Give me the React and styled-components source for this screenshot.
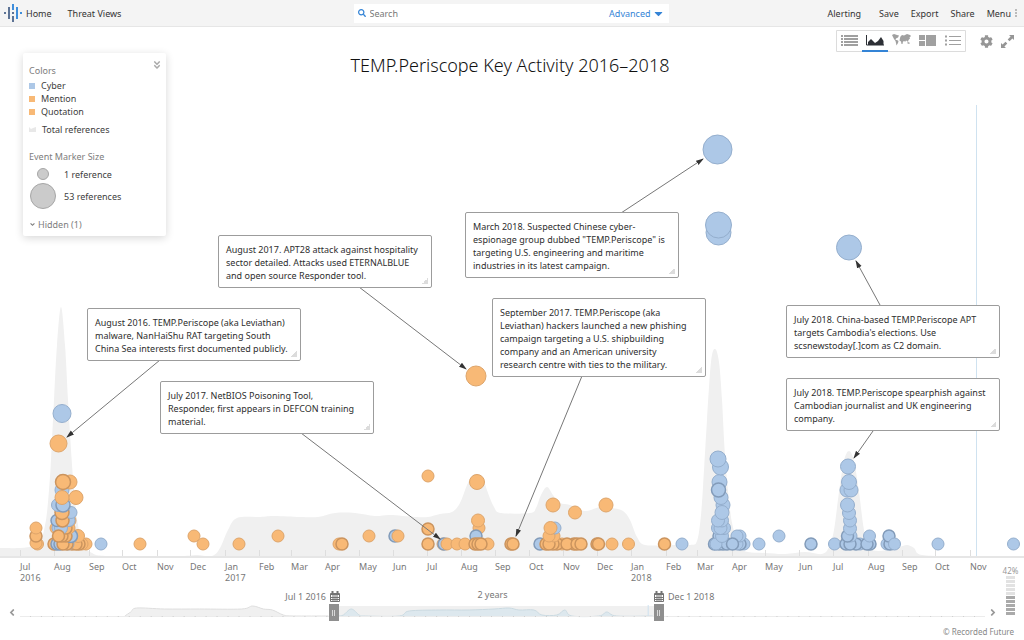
import { useState } from "react";
import styled, { createGlobalStyle } from "styled-components";
import {
  FaAngleDoubleDown,
  FaAngleDown,
  FaAngleLeft,
  FaAngleRight,
  FaCaretDown,
  FaCog,
  FaSearch,
} from "react-icons/fa";

const BLUE = "#adc8e7";
const ORANGE = "#f8b976";

const MONTHS = [
  [20, "Jul", "2016"], [54, "Aug"], [89, "Sep"], [122, "Oct"], [157, "Nov"], [190, "Dec"],
  [225, "Jan", "2017"], [259, "Feb"], [291, "Mar"], [325, "Apr"], [359, "May"], [393, "Jun"],
  [427, "Jul"], [461, "Aug"], [495, "Sep"], [529, "Oct"], [563, "Nov"], [597, "Dec"],
  [631, "Jan", "2018"], [666, "Feb"], [697, "Mar"], [732, "Apr"], [765, "May"], [799, "Jun"],
  [833, "Jul"], [868, "Aug"], [902, "Sep"], [935, "Oct"], [970, "Nov"],
];

const NOTES = [
  { x: 87, y: 308, text: "August 2016. TEMP.Periscope (aka Leviathan)\nmalware, NanHaiShu RAT targeting South\nChina Sea interests first documented publicly." },
  { x: 160, y: 381, text: "July 2017. NetBIOS Poisoning Tool,\nResponder, first appears in DEFCON training\nmaterial." },
  { x: 218, y: 235, text: "August 2017. APT28 attack against hospitality\nsector detailed. Attacks used ETERNALBLUE\nand open source Responder tool." },
  { x: 465, y: 212, text: "March 2018. Suspected Chinese cyber-\nespionage group dubbed \"TEMP.Periscope\" is\ntargeting U.S. engineering and maritime\nindustries in its latest campaign." },
  { x: 492, y: 298, text: "September 2017. TEMP.Periscope (aka\nLeviathan) hackers launched a new phishing\ncampaign targeting a U.S. shipbuilding\ncompany and an American university\nresearch centre with ties to the military." },
  { x: 786, y: 305, text: "July 2018. China-based TEMP.Periscope APT\ntargets Cambodia's elections. Use\nscsnewstoday[.]com as C2 domain." },
  { x: 786, y: 378, text: "July 2018. TEMP.Periscope spearphish against\nCambodian journalist and UK engineering\ncompany." },
];

const ARROWS = [
  [160, 360, 67, 437],
  [301, 433, 440, 539],
  [359, 287, 466, 369],
  [621, 213, 703, 159],
  [582, 376, 516, 536],
  [880, 305, 856, 261],
  [873, 431, 854, 458],
];

// color, x, y, radius, number of references stacked on the spot
const EVENTS = [
  ["b", 717.5, 149.5, 14.5], ["b", 718.5, 232.5, 12.5], ["b", 718.5, 225, 13], ["b", 849, 247.5, 12.5],
  ["b", 62, 413.5, 9], ["o", 58.5, 443.5, 8.5], ["o", 476, 376, 10],

  ["o", 37.5, 544], ["o", 36, 543], ["o", 36, 536, 6, 2], ["o", 36, 528],

  ["o", 54, 544, 6, 2], ["b", 57, 544, 6, 2], ["b", 60, 544, 6, 2], ["o", 72, 544, 6, 2],
  ["o", 86, 544], ["o", 82, 544], ["o", 79, 544, 6, 2], ["o", 76, 544, 6, 2], ["b", 68, 544],
  ["o", 67, 544, 6, 2], ["o", 63, 544, 6, 3], ["o", 78, 536, 6.5], ["b", 71, 536, 6.5, 3],
  ["o", 66, 536, 6, 2], ["o", 62, 536, 6, 2], ["o", 56, 528], ["b", 58, 528], ["o", 69, 528, 6],
  ["o", 66, 528, 6, 2], ["b", 61, 528, 6.5], ["o", 58.5, 536, 6, 2],
  ["b", 57, 520.5, 6, 2], ["o", 70, 520.5, 6], ["b", 69, 520.5, 6], ["o", 62.5, 520.5, 6.5, 2],
  ["b", 71, 512.5, 6], ["o", 62, 512.5, 7, 2], ["b", 58, 505, 6.5], ["b", 63, 505, 7, 3],
  ["b", 62, 490, 7], ["o", 62, 497.5, 7], ["o", 76, 497.5, 7], ["o", 70, 482, 7], ["o", 63, 482, 7.5, 3],
  ["b", 101, 544],

  ["o", 140, 544], ["o", 194, 536], ["o", 203, 544], ["o", 239, 544], ["o", 278, 536],
  ["o", 339, 544], ["o", 342, 544, 6, 3], ["o", 369, 536], ["b", 395, 536, 6, 2], ["o", 398, 536],
  ["o", 428, 476], ["o", 428, 529, 6, 3], ["o", 428, 544, 6, 3],
  ["o", 443, 544], ["b", 444, 544, 6, 2], ["o", 447, 544], ["o", 457, 544], ["o", 465, 544],
  ["o", 477, 482, 7.5], ["o", 479, 528], ["o", 478, 520.5, 6.5], ["b", 476, 536, 6, 2],
  ["o", 488, 544], ["o", 475, 544, 6, 3], ["o", 478, 544, 6, 3], ["o", 481, 544, 6, 3],
  ["o", 511, 544, 6, 2], ["o", 513, 544, 6, 2],

  ["b", 540, 544, 6, 3], ["o", 546, 544, 6, 2], ["o", 562, 544], ["o", 557, 544, 6, 2], ["o", 553, 544, 6, 2],
  ["o", 549, 544, 6, 2], ["o", 554, 536], ["o", 549, 536], ["b", 555, 528], ["o", 550.5, 528, 6.5],
  ["o", 553, 505, 7], ["o", 575, 512.5, 6.5], ["o", 606, 505, 7],
  ["o", 574, 544, 6, 2], ["o", 567, 544, 6, 2], ["o", 577, 544, 6, 2], ["o", 581, 544, 6, 2],
  ["o", 597, 544, 6, 2], ["o", 598.5, 544, 6, 2], ["o", 612, 544], ["o", 628.5, 544], ["o", 664.5, 544, 6, 3],
  ["b", 682, 544],

  ["b", 714.5, 544, 6, 2], ["b", 719, 544, 6, 3], ["b", 723, 544, 6, 3], ["b", 727, 544, 6, 3],
  ["b", 719, 536, 6, 2], ["b", 744, 544], ["b", 740, 544, 6, 2], ["b", 737, 544], ["b", 740, 536], ["b", 737, 536],
  ["b", 732.5, 544, 6, 2], ["b", 716, 544], ["b", 722, 536, 6.5],
  ["b", 718, 528, 6.5], ["b", 724, 528, 6.5], ["b", 720.5, 528, 6.5], ["b", 722, 520.5, 6.5], ["b", 718, 520.5, 6.5],
  ["b", 723, 505, 7], ["b", 721, 497.5, 7], ["b", 722, 512.5, 7], ["b", 719.5, 482, 7.5],
  ["b", 718.5, 490, 7, 3], ["b", 720.5, 467, 8], ["b", 718, 459, 8],
  ["b", 759, 544], ["b", 779, 536], ["b", 811, 544, 6, 3], ["b", 834.5, 544],

  ["b", 860, 544], ["b", 856, 544, 6, 2], ["b", 846, 544, 6, 2], ["b", 850, 544, 6, 3], ["b", 851, 536],
  ["b", 847.5, 536, 6, 3], ["b", 850, 528.5, 6.5], ["b", 850, 520.5, 6.5], ["b", 849, 513, 6.5], ["b", 847.5, 505, 7],
  ["b", 847, 490, 7], ["b", 851, 490, 7], ["b", 849, 482, 7.5], ["b", 848, 466.5, 7.5],
  ["b", 870, 544, 6, 2], ["b", 867, 544, 6, 2], ["b", 869.5, 536],
  ["b", 887, 544], ["b", 890, 544, 6, 2], ["b", 889, 536, 6, 3], ["b", 894.5, 544],
  ["b", 938, 544], ["b", 1013.5, 544],
];

const TOTALS = [
  [0, 548], [20, 548], [34, 546], [41, 540], [46, 520], [49, 490], [51, 460], [54, 400], [57, 345], [61, 307],
  [65, 345], [68, 400], [71, 450], [74, 490], [78, 525], [84, 545], [92, 553], [108, 556], [180, 556],
  [197, 555], [212, 556], [220, 548], [228, 530], [237, 518], [260, 517], [275, 516], [300, 517], [318, 517],
  [335, 513], [355, 513], [375, 516], [390, 515], [415, 517], [428, 517], [440, 514], [452, 512], [460, 503],
  [467, 485], [472, 476], [477, 474], [483, 479], [488, 493], [494, 507], [501, 513], [530, 513], [536, 508],
  [541, 495], [547, 487], [553, 495], [560, 503], [570, 505], [585, 511], [600, 507], [612, 508], [623, 511],
  [630, 520], [637, 537], [645, 545], [670, 545], [690, 545], [697, 541], [701, 515], [704, 470], [707, 420],
  [711, 362], [715, 349], [719, 362], [722, 400], [725, 455], [730, 510], [735, 535], [740, 548], [748, 552],
  [765, 553], [785, 554], [805, 552], [822, 554], [829, 547], [834, 530], [839, 492], [844, 461], [849, 451],
  [854, 461], [859, 492], [864, 530], [870, 549], [890, 550], [900, 547], [907, 545], [914, 548], [922, 555],
  [960, 556], [1024, 556],
];

const OVERVIEW = [
  [125, 616], [131, 612], [137, 608], [165, 609], [200, 609], [242, 609], [253, 606], [264, 609],
  [273, 610], [284, 615], [294, 616], [329, 616],
];

const SELECTED = [
  [339, 616], [344, 615], [352, 609], [360, 615], [366, 616], [400, 616], [410, 611], [440, 610], [470, 610],
  [495, 609], [510, 608], [520, 610], [535, 610], [543, 615], [558, 615], [566, 610], [573, 616], [600, 616],
  [608, 612], [618, 616], [654, 616],
];

function smooth(points) {
  return points
    .map(([x, y], i) => {
      if (i === 0) return `M${x} ${y}`;
      const a = points[i - 2] || points[i - 1];
      const b = points[i - 1];
      const d = points[i + 1] || [x, y];
      return `C${b[0] + (x - a[0]) / 6} ${b[1] + (y - a[1]) / 6} ${x - (d[0] - b[0]) / 6} ${y - (d[1] - b[1]) / 6} ${x} ${y}`;
    })
    .join("");
}

function area(points, base) {
  return `${smooth(points)}L${points[points.length - 1][0]} ${base}L${points[0][0]} ${base}Z`;
}

function outline(kind, refs) {
  if (kind === "b") return refs > 1 ? "#829bb9" : "#94aecd";
  return refs > 1 ? "#cb945e" : "#dea56b";
}

const GlobalStyle = createGlobalStyle`
  * {
    box-sizing: border-box;
  }
  body {
    margin: 0;
    background: #fff;
    color: #404040;
    font-family: "Noto Sans", "Open Sans", sans-serif;
    font-size: 9px;
  }
  button, input {
    font: inherit;
    color: inherit;
    border: 0;
    padding: 0;
    background: none;
  }
  button {
    cursor: pointer;
  }
`;

const Page = styled.div`
  display: flex;
  flex-direction: column;
  min-height: 100vh;
`;

const Header = styled.header`
  display: grid;
  grid-template-columns: 1fr 315px 1fr;
  align-items: center;
  height: 27px;
  padding: 0 5px 0 3px;
  background: #f4f4f4;
  border-bottom: 1px solid #e6e6e6;
`;

const Nav = styled.nav`
  display: flex;
  align-items: center;
  justify-content: ${(p) => (p.$end ? "flex-end" : "flex-start")};
  gap: ${(p) => (p.$end ? "12px" : "16px")};
`;

const NavLink = styled.a`
  display: flex;
  align-items: center;
  gap: 3px;
  color: #333;
  text-decoration: none;
`;

const NavButton = styled.button`
  color: #333;
  margin-left: ${(p) => (p.$first ? "6px" : "0")};
`;

const MenuButton = styled(NavButton)`
  display: flex;
  align-items: center;
  gap: 4px;
  padding-right: 2px;
`;

const Search = styled.form`
  display: flex;
  align-items: center;
  gap: 4px;
  height: 19px;
  padding: 0 4px;
  background: #fff;
  color: #3484d6;
`;

const SearchInput = styled.input`
  flex: 1;
  min-width: 0;
  color: #333;
  outline: none;
  &::placeholder {
    color: #777;
  }
`;

const Advanced = styled.button`
  display: flex;
  align-items: center;
  gap: 1px;
  color: #3484d6;
`;

const Main = styled.main`
  position: relative;
`;

const Tools = styled.div`
  display: flex;
  align-items: center;
  justify-content: flex-end;
  gap: 8px;
  height: 25px;
  padding: 3px 10px 0 0;
  color: #969696;
`;

const ViewSwitch = styled.div`
  display: flex;
  margin-right: 6px;
  border-radius: 1px;
  box-shadow: inset 0 0 0 1px #dcdcdc;
`;

const ViewButton = styled.button`
  display: flex;
  align-items: center;
  justify-content: center;
  width: 26px;
  height: 22px;
  border-bottom: 2px solid ${(p) => (p.$active ? "#3484d6" : "transparent")};
  color: ${(p) => (p.$active ? "#2d3036" : "#a0a0a0")};
`;

const ToolButton = styled.button`
  display: flex;
  font-size: 13px;
`;

const Title = styled.h1`
  margin: 0;
  padding: 1px 4px 0 0;
  font-size: 18px;
  font-weight: 300;
  line-height: 24px;
  text-align: center;
  color: #111;
`;

const Canvas = styled.div`
  position: relative;
  margin-top: 21px;
`;

const Plot = styled.svg`
  display: block;
  width: 100%;
  height: auto;
`;

const Note = styled.div`
  position: absolute;
  left: calc(${(p) => p.$x} / 1024 * 100%);
  top: calc(${(p) => p.$y - 98} / 460 * 100%);
  width: 214px;
  padding: 7px 6px 5px 7px;
  border: 1px solid #9c9c9c;
  border-radius: 2px;
  background: #fff;
  color: #2e2e2e;
  line-height: 13px;
  white-space: pre;

  &::after {
    content: "";
    position: absolute;
    right: 3px;
    bottom: 3px;
    width: 6px;
    height: 6px;
    background: linear-gradient(135deg, transparent 50%, #dcdcdc 50%);
  }
`;

const LegendPanel = styled.aside`
  position: absolute;
  left: 23px;
  top: 26px;
  width: 143px;
  padding: 10px 4px 5px 6px;
  border-radius: 2px;
  background: #fff;
  box-shadow: 0 2px 8px rgba(0, 0, 0, 0.16);
  z-index: 1;
`;

const LegendTitle = styled.h2`
  display: flex;
  justify-content: space-between;
  margin: 0;
  font-size: 9px;
  font-weight: 400;
  line-height: 16px;
  color: #7d7d7d;
`;

const Collapse = styled.button`
  display: flex;
  height: 4px;
  align-items: center;
  color: #aaa;
`;

const LegendList = styled.ul`
  list-style: none;
  margin: 0 0 ${(p) => p.$after || 0}px;
  padding: 0;
`;

const LegendItem = styled.li`
  display: flex;
  align-items: center;
  gap: 6px;
  line-height: 13px;
`;

const Swatch = styled.span`
  width: 6px;
  height: 6px;
  background: ${(p) => p.$color};
`;

const SizeItem = styled.li`
  display: grid;
  grid-template-columns: 28px 1fr;
  align-items: center;
  justify-items: center;
  gap: 7px;
  min-height: 18px;
  span:last-child {
    justify-self: start;
  }
`;

const SizeDot = styled.span`
  width: ${(p) => p.$size}px;
  height: ${(p) => p.$size}px;
  border: 1px solid #a6a6a6;
  border-radius: 50%;
  background: #cbcbcb;
`;

const HiddenToggle = styled.button`
  display: flex;
  align-items: center;
  gap: 2px;
  margin-top: 9px;
  line-height: 13px;
  color: #7d7d7d;
`;

const Timeline = styled.section`
  display: grid;
  grid-template-columns: 1fr 24px;
  color: #777;
`;

const Axis = styled.ol`
  display: grid;
  grid-template-columns: ${(p) => p.$columns};
  list-style: none;
  margin: 0;
  padding: 3px 0 0 2%;
  height: 31px;
  line-height: 11px;
`;

const Month = styled.li`
  min-width: 0;
  white-space: pre-line;
`;

const Dates = styled.div`
  display: grid;
  grid-template-columns: 340fr 305fr 355fr;
  align-items: end;
  height: 14px;
  line-height: 12px;
`;

const DateButton = styled.button`
  display: flex;
  align-items: center;
  gap: 4px;
  justify-self: ${(p) => p.$side};
  margin-left: ${(p) => (p.$side === "start" ? "9px" : "0")};
`;

const Span = styled.span`
  align-self: start;
  line-height: 11px;
  text-align: center;
`;

const RangeRow = styled.div`
  display: flex;
  align-items: center;
  gap: 4px;
  padding: 0 3px 0 8px;
`;

const StepButton = styled.button`
  display: flex;
  width: 8px;
  font-size: 11px;
  color: #999;
`;

const RangeBox = styled.div`
  flex: 1;
  display: grid;
  height: 18px;
  > * {
    grid-area: 1 / 1;
  }
`;

const OverviewPlot = styled.svg`
  width: 100%;
  height: 18px;
`;

const Handle = styled.input`
  appearance: none;
  width: 100%;
  height: 18px;
  margin: 0;
  pointer-events: none;
  &::-webkit-slider-thumb {
    appearance: none;
    width: 10px;
    height: 17px;
    pointer-events: auto;
    background: linear-gradient(90deg, transparent 3px, #d8d8d8 3px 4px, transparent 4px 5px, #d8d8d8 5px 6px, transparent 6px)
        center 6px / 10px 6px no-repeat,
      #8f8f8f;
  }
`;

const Gauge = styled.div`
  display: flex;
  flex-direction: column;
  align-items: center;
  gap: 1px;
  padding: 8px 3px 0 0;
  font-size: 8px;
  line-height: 9px;
  color: #999;
`;

const GaugeBar = styled.span`
  width: 9px;
  height: 3px;
  background: ${(p) => (p.$on ? "#aaa" : "#e2e2e2")};
`;

const Footer = styled.footer`
  padding: 5px 10px 0;
  font-size: 8px;
  line-height: 12px;
  text-align: right;
  color: #888;
`;

const Logo = () => (
  <svg width="20" height="20" viewBox="0 0 20 20" strokeWidth="2">
    <path d="M1 10h2M6 4v12M10 13v6M9 10h2" stroke="#5d7395" />
    <path d="M10 1v6M14 4v12M17 10h2" stroke="#3f8edb" />
  </svg>
);

const CalendarIcon = () => (
  <svg width="10" height="12" viewBox="0 0 10 12" fill="none" stroke="#747474">
    <path d="M.5 2.5h9v8h-9zM0 3.5h10M3 4v7M5 4v7M7 4v7M1 6.5h8M1 8.500h8" />
    <path d="M2.500 0v3M7.500 0v3" strokeWidth="2" />
  </svg>
);

const ListIcon = () => (
  <svg width="17" height="12" viewBox="0 0 17 12" stroke="currentColor" strokeWidth="2">
    <path d="M0 2h2M0 5h2M0 8h2M0 11h2M3 2h14M3 5h14M3 8h14M3 11h14" />
  </svg>
);

const AreaIcon = () => (
  <svg width="18" height="12" viewBox="0 0 18 12">
    <path d="M.5 1v10H18" fill="none" stroke="currentColor" />
    <path d="M2 11V8l3-3 4 4 3-2 3-4 2.500 4v4z" fill="currentColor" />
  </svg>
);

const MapIcon = () => (
  <svg width="19" height="12" viewBox="0 0 19 12" fill="currentColor">
    <path d="M0 1l2-1 3 1 2 .5-1 2-2 1-.5 1.500L5 6l1.500 1-.5 2-1.500 2.500L4 9l-.5-2L2 5 1 3zM8 4l.5-1.500L10 1l2 .5 3-1.500 3 1 1 1-1.500 1.500.5 1-1.500 1.500-.5 2-1-1-1-.5-1 1.500-.5-1-1.500.5-.5 2.500L9.500 10 9 7.500 7.500 6.500zM15.500 8l2 .5V10l-2-.5z" />
  </svg>
);

const TilesIcon = () => (
  <svg width="17" height="12" viewBox="0 0 17 12" fill="currentColor">
    <path d="M0 1h6v5H0zM0 7h6v5H0zM7 1h10v11H7z" />
  </svg>
);

const BulletsIcon = () => (
  <svg width="16" height="11" viewBox="0 0 16 11" stroke="currentColor">
    <path d="M0 1.500h2M0 5.500h2M0 9.500h2" strokeWidth="2" />
    <path d="M4 1.500h12M4 5.500h12M4 9.500h12" />
  </svg>
);

const ExpandIcon = () => (
  <svg width="13" height="13" viewBox="0 0 13 13" fill="currentColor">
    <path d="M8 0h5v5l-1.600-1.600L8.500 6.300 6.700 4.500l2.900-2.900zM5 13H0V8l1.600 1.600 2.900-2.900 1.800 1.800-2.900 2.900z" />
  </svg>
);

const VIEWS = [
  ["List", ListIcon],
  ["Timeline", AreaIcon],
  ["Map", MapIcon],
  ["Tiles", TilesIcon],
  ["Details", BulletsIcon],
];

function Legend() {
  return (
    <LegendPanel>
      <LegendTitle>
        Colors
        <Collapse aria-label="Collapse legend">
          <FaAngleDoubleDown size={10} />
        </Collapse>
      </LegendTitle>
      <LegendList $after={5}>
        <LegendItem><Swatch $color={BLUE} />Cyber</LegendItem>
        <LegendItem><Swatch $color={ORANGE} />Mention</LegendItem>
        <LegendItem><Swatch $color={ORANGE} />Quotation</LegendItem>
      </LegendList>
      <LegendList $after={13}>
        <LegendItem>
          <svg width="7" height="5" viewBox="0 0 7 5">
            <path d="M0 0l2 2 2-1 3-1v5H0z" fill="#e8e8e8" />
          </svg>
          Total references
        </LegendItem>
      </LegendList>
      <LegendTitle>Event Marker Size</LegendTitle>
      <LegendList>
        <SizeItem><SizeDot $size={12} /><span>1 reference</span></SizeItem>
        <SizeItem><SizeDot $size={26} /><span>53 references</span></SizeItem>
      </LegendList>
      <HiddenToggle>
        <FaAngleDown size={7} />
        Hidden (1)
      </HiddenToggle>
    </LegendPanel>
  );
}

function Timechart() {
  return (
    <Canvas>
      <Plot viewBox="0 98 1024 460">
        <defs>
          <marker id="head" viewBox="0 0 8 6" refX="7" refY="3" markerWidth="8" markerHeight="6" orient="auto">
            <path d="M0 0.500L8 3L0 5.500z" fill="#333" />
          </marker>
        </defs>
        <path d={area(TOTALS, 557)} fill="#f0f0f0" />
        <path d="M0 557H1024" stroke="#e6e6e6" strokeWidth="2" />
        {MONTHS.map(([x]) => (
          <path key={x} d={`M${x + 0.5} 550v6`} stroke="#dedede" />
        ))}
        <path d="M976.500 105V556" stroke="#cfe2f0" />
        {EVENTS.map(([kind, x, y, r = 6, refs = 1], i) => (
          <circle
            key={i}
            cx={x}
            cy={y}
            r={r}
            fill={kind === "b" ? BLUE : ORANGE}
            stroke={outline(kind, refs)}
            strokeWidth={refs > 1 ? 1.5 : 1}
          />
        ))}
        {ARROWS.map(([x1, y1, x2, y2]) => (
          <line key={x1} x1={x1} y1={y1} x2={x2} y2={y2} stroke="#777" markerEnd="url(#head)" />
        ))}
      </Plot>
      {NOTES.map((note) => (
        <Note key={note.text} $x={note.x} $y={note.y}>{note.text}</Note>
      ))}
    </Canvas>
  );
}

function Overview() {
  const [from, setFrom] = useState(324);
  const [to, setTo] = useState(664);

  return (
    <RangeRow>
      <StepButton aria-label="Earlier"><FaAngleLeft /></StepButton>
      <RangeBox>
        <OverviewPlot viewBox="20 603 967 18" preserveAspectRatio="none">
          <path d={area(OVERVIEW, 616.5)} fill="#f0f0f0" />
          <path d={smooth(OVERVIEW)} fill="none" stroke="#dedede" />
          <path d="M334 606H660V616.500H334z" fill="#f0f0f0" />
          <path d={area(SELECTED, 616.5)} fill="#dde8ee" />
          <path d={smooth(SELECTED)} fill="none" stroke="#cbdae1" />
          <path d="M649.500 605V616" stroke="#cfe2f0" />
          <path d="M20 616.500H987" stroke="#ececec" />
          <path d="M30 616.500H987" stroke="#cfcfcf" strokeDasharray="1 10" />
        </OverviewPlot>
        <Handle type="range" aria-label="Start date" min="0" max="1000" value={from} onChange={(e) => setFrom(+e.target.value)} />
        <Handle type="range" aria-label="End date" min="0" max="1000" value={to} onChange={(e) => setTo(+e.target.value)} />
      </RangeBox>
      <StepButton aria-label="Later"><FaAngleRight /></StepButton>
    </RangeRow>
  );
}

export default function App() {
  const [view, setView] = useState("Timeline");
  const columns = MONTHS.map(([x], i) => `${(MONTHS[i + 1]?.[0] ?? 1000) - x}fr`).join(" ");

  return (
    <Page>
      <GlobalStyle />
      <Header>
        <Nav>
          <NavLink href="#home"><Logo />Home</NavLink>
          <NavLink href="#threat-views">Threat Views</NavLink>
        </Nav>
        <Search onSubmit={(e) => e.preventDefault()}>
          <FaSearch size={8} />
          <SearchInput type="search" placeholder="Search" aria-label="Search" />
          <Advanced type="button">Advanced <FaCaretDown size={13} /></Advanced>
        </Search>
        <Nav $end>
          <NavButton>Alerting</NavButton>
          <NavButton $first>Save</NavButton>
          <NavButton>Export</NavButton>
          <NavButton>Share</NavButton>
          <MenuButton>
            Menu
            <svg width="2" height="8" viewBox="0 0 2 8" fill="#bbb">
              <path d="M0 0h2v2H0zM0 3h2v2H0zM0 6h2v2H0z" />
            </svg>
          </MenuButton>
        </Nav>
      </Header>
      <Main>
        <Tools>
          <ViewSwitch>
            {VIEWS.map(([name, Icon]) => (
              <ViewButton key={name} aria-label={name} $active={view === name} onClick={() => setView(name)}>
                <Icon />
              </ViewButton>
            ))}
          </ViewSwitch>
          <ToolButton aria-label="Settings"><FaCog /></ToolButton>
          <ToolButton aria-label="Full screen"><ExpandIcon /></ToolButton>
        </Tools>
        <Title>TEMP.Periscope Key Activity 2016–2018</Title>
        <Legend />
        <Timechart />
      </Main>
      <Timeline>
        <div>
          <Axis $columns={columns}>
            {MONTHS.map(([x, name, year]) => (
              <Month key={x}>{year ? `${name}\n${year}` : name}</Month>
            ))}
          </Axis>
          <Dates>
            <DateButton $side="end">Jul 1 2016 <CalendarIcon /></DateButton>
            <Span>2 years</Span>
            <DateButton $side="start"><CalendarIcon /> Dec 1 2018</DateButton>
          </Dates>
          <Overview />
        </div>
        <Gauge>
          42%
          {Array.from({ length: 10 }, (_, i) => (
            <GaugeBar key={i} $on={i > 4} />
          ))}
        </Gauge>
      </Timeline>
      <Footer>© Recorded Future</Footer>
    </Page>
  );
}
